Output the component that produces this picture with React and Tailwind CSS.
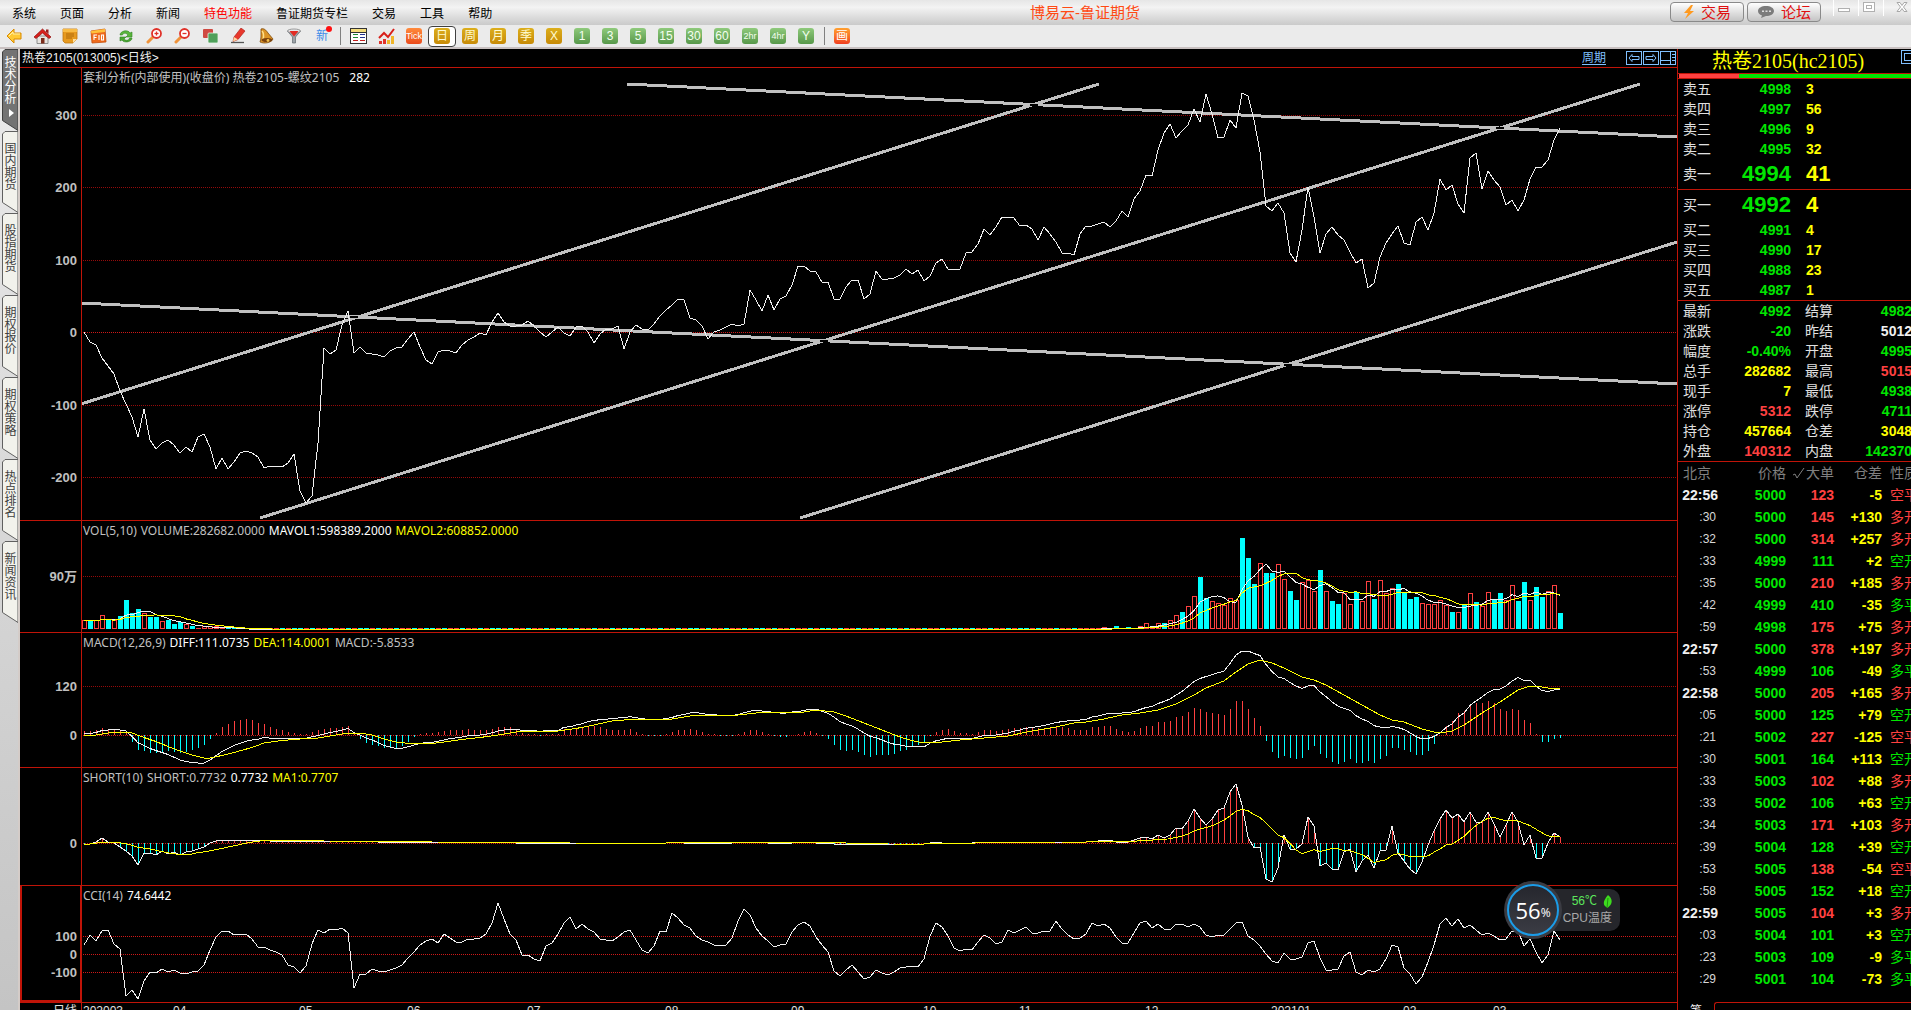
import React from "react";

const GREEN = "text-[#00e600]";
const RED = "text-[#ff4040]";
const YELLOW = "text-[#ffff00]";
const WHITE = "text-[#f0f0f0]";

const menus = ["系统", "页面", "分析", "新闻", "特色功能", "鲁证期货专栏", "交易", "工具", "帮助"];
const sideTabs = ["技术分析", "国内期货", "股指期货", "期权报价", "期权策略", "热点排名", "新闻资讯"];

const sells = [["卖五", 4998, 3], ["卖四", 4997, 56], ["卖三", 4996, 9], ["卖二", 4995, 32]];
const buys = [["买二", 4991, 4], ["买三", 4990, 17], ["买四", 4988, 23], ["买五", 4987, 1]];

const quotes = [
  ["最新", "4992", GREEN, "结算", "4982", GREEN],
  ["涨跌", "-20", GREEN, "昨结", "5012", WHITE],
  ["幅度", "-0.40%", GREEN, "开盘", "4995", GREEN],
  ["总手", "282682", YELLOW, "最高", "5015", RED],
  ["现手", "7", YELLOW, "最低", "4938", GREEN],
  ["涨停", "5312", RED, "跌停", "4711", GREEN],
  ["持仓", "457664", YELLOW, "仓差", "3048", YELLOW],
  ["外盘", "140312", RED, "内盘", "142370", GREEN],
];

const ticks = [
  ["22:56", 5000, 123, "-5", "空平", RED],
  [":30", 5000, 145, "+130", "多开", RED],
  [":32", 5000, 314, "+257", "多开", RED],
  [":33", 4999, 111, "+2", "空开", GREEN],
  [":35", 5000, 210, "+185", "多开", RED],
  [":42", 4999, 410, "-35", "多平", GREEN],
  [":59", 4998, 175, "+75", "多开", RED],
  ["22:57", 5000, 378, "+197", "多开", RED],
  [":53", 4999, 106, "-49", "多平", GREEN],
  ["22:58", 5000, 205, "+165", "多开", RED],
  [":05", 5000, 125, "+79", "空开", GREEN],
  [":21", 5002, 227, "-125", "空平", RED],
  [":30", 5001, 164, "+113", "空开", GREEN],
  [":33", 5003, 102, "+88", "多开", RED],
  [":33", 5002, 106, "+63", "空开", GREEN],
  [":34", 5003, 171, "+103", "多开", RED],
  [":39", 5004, 128, "+39", "空开", GREEN],
  [":53", 5005, 138, "-54", "空平", RED],
  [":58", 5005, 152, "+18", "空开", GREEN],
  ["22:59", 5005, 104, "+3", "多开", RED],
  [":03", 5004, 101, "+3", "空开", GREEN],
  [":23", 5003, 109, "-9", "多平", GREEN],
  [":29", 5001, 104, "-73", "多平", GREEN],
];

// spread line, one row per trading day
const spread = [
  332, 342, 345, 358, 366, 374, 391, 404, 417, 437, 409, 440, 449, 443, 440, 445, 453, 447, 452, 437,
  434, 447, 469, 458, 469, 462, 453, 451, 453, 457, 468, 466, 466, 467, 463, 454, 491, 503, 496, 443,
  348, 354, 350, 325, 311, 353, 347, 353, 354, 355, 357, 351, 348, 347, 339, 332, 347, 360, 364, 352,
  350, 351, 353, 345, 340, 337, 333, 335, 322, 313, 322, 326, 326, 325, 321, 326, 332, 337, 332, 327,
  333, 336, 327, 326, 332, 343, 334, 329, 329, 326, 349, 332, 325, 329, 330, 324, 316, 310, 305, 299,
  300, 318, 320, 326, 339, 332, 330, 327, 324, 326, 324, 290, 300, 311, 295, 310, 299, 296, 285, 266,
  266, 271, 272, 282, 282, 299, 299, 287, 280, 280, 299, 294, 271, 279, 279, 278, 275, 269, 274, 270,
  281, 276, 263, 259, 269, 269, 269, 253, 252, 244, 229, 235, 227, 217, 217, 218, 226, 225, 229, 240,
  227, 234, 242, 253, 253, 255, 234, 226, 226, 224, 222, 227, 221, 211, 217, 199, 191, 175, 176, 150,
  133, 124, 138, 131, 125, 109, 122, 94, 114, 138, 137, 120, 128, 93, 96, 120, 152, 206, 211, 203,
  213, 253, 262, 230, 187, 217, 253, 234, 227, 235, 240, 252, 263, 259, 288, 283, 257, 243, 234, 226,
  243, 245, 222, 217, 230, 213, 179, 190, 185, 204, 213, 158, 153, 189, 171, 180, 187, 205, 200, 211,
  200, 179, 167, 167, 160, 140, 128,
];

// negative = down day
const quiet = Array.from({ length: 142 }, (_, i) => ((i * 7) % 11 < 5 ? -0.4 : 0.4));
const volume = [
  9, -9, 9, 14, -9, 9, -13, -29, -16, -20, 16, -12, -12, 8, -9, -5, -7, 5, -3, 1, 3, 3, 3, 2, -2,
  ...quiet,
  1, 1, 1, 2, 1, -3, 1, -2, 1, 3, 6, 3, 6, -6, 9, 14, -17, 23, 33, -52, -31, 28, 26, 24, 31, 29, -91,
  -71, -45, 66, -56, -56, 65, 50, -38, -29, 47, 49, 38, -59, 38, -28, -25, 36, 25, -37, 28, 48, -30,
  49, 36, 41, -45, -36, -30, -32, 26, 25, 25, 29, 24, -17, 17, -25, 36, -27, 23, 37, -30, -36, 29, 44,
  -28, -47, 29, -42, -32, 38, 44, -16,
];

const macd = [
  4, 4, 5, 7, 6, 6, 4, 3, -7, -15, -16, -18, -18, -17, -16, -17, -18, -17, -15, -13, -10, -4, 2, 8, 11,
  14, 15, 16, 15, 12, 11, 8, 6, 5, 3, 2, 1, 1, 3, 5, 6, 7, 7, 8, 9, 1, -4, -8, -10, -11, -13, -13, -13,
  -11, -7, -2, 1, 2, 2, 3, 4, 5, 5, 5, 6, 5, 5, 5, 6, 8, 8, 8, 6, 2, 1, 1, -1, 1, 1, 1, 6, 5, 7, 7, 9,
  9, 8, 6, 5, 5, 5, 6, 3, 1, -1, -1, -1, 1, 3, 5, 5, 6, 5, 3, 1, 1, -1, -1, -1, 1, 3, 5, 5, 3, 1, -1,
  -2, -2, 0, 1, 3, 4, 2, -1, -4, -10, -15, -16, -15, -17, -20, -22, -20, -20, -20, -19, -16, -15, -12,
  -10, -8, -1, 3, 5, 6, 4, 2, 2, 1, 3, 5, 5, 4, 5, 6, 7, 7, 8, 7, 7, 7, 8, 9, 8, 7, 5, 5, 5, 8, 8, 9, 9,
  6, 4, 3, 4, 7, 9, 9, 13, 13, 14, 18, 19, 23, 27, 26, 23, 22, 21, 20, 26, 34, 34, 26, 17, 9, -6, -17,
  -23, -21, -23, -24, -23, -15, -11, -19, -23, -27, -29, -27, -24, -28, -28, -26, -28, -24, -21, -13,
  -13, -15, -17, -20, -20, -16, -9, 0, 9, 14, 22, 24, 31, 32, 32, 34, 32, 26, 24, 26, 25, 15, 12, 1,
  -7, -7, -4, -3,
];

const deaKeys = [
  [0, -1], [2, 0], [4, 2], [6, 3], [8, 2], [10, -2.5], [12, -6.5], [14, -11.5], [16, -16], [18, -20],
  [20, -23], [21, -23], [23, -20.5], [25, -17.5], [28, -12.5], [30, -8], [33, -5.5], [36, -4], [39, -3],
  [41, -1], [44, 2], [46, 2], [48, 0], [50, -4], [52, -7], [55, -9], [58, -8.5], [60, -7], [63, -4.5],
  [66, -2.5], [69, 0], [72, 3], [74, 4], [79, 4], [82, 6.5], [85, 10], [88, 14], [90, 15], [93, 16],
  [98, 16], [102, 20], [109, 20], [112, 22], [114, 23], [120, 23], [122, 25], [125, 23], [127, 19],
  [130, 12], [133, 5], [136, -2], [138, -5.5], [140, -8], [143, -7], [146, -5], [150, -3], [154, -1],
  [156, 1.5], [158, 4], [162, 8], [165, 12], [167, 13], [170, 16], [173, 20], [176, 22], [179, 25],
  [182, 31], [185, 40], [187, 47], [190, 54], [192, 63], [194, 71], [196, 75], [198, 72], [200, 67],
  [203, 58], [205, 55], [207, 50], [210, 40], [213, 30], [216, 20], [218, 15], [220, 13], [223, 6],
  [225, 3], [226, 2], [228, 4], [230, 10], [233, 22], [236, 33], [239, 45], [241, 49], [243, 48],
  [244, 47], [246, 47],
];

const flat = (n, v) => Array(n).fill(v);
const short = [
  -1, -1, 1, 5, 1, 0, -4, -8, -13, -22, -10, -10, -12, -8, -11, -9, -12, -9, -8, -6, -4, 0, 2, 3, 2,
  ...flat(6, 3), ...flat(18, 2), ...flat(23, 1), ...flat(26, 0), 1, 1, ...flat(9, 0), ...flat(5, 1),
  ...flat(5, 0), 1, 1, 1, ...flat(3, 0), ...flat(16, -1), 0, 1, ...flat(6, 0), 1, 1, 1, 0,
  ...flat(13, 1),
  1, 1, 2, 2, 3, 3, 1, 1, 1, 3, 5, 6, 4, 8, 5, 8, 15, 14, 22, 34, 25, 18, 24, 33, 35, 51, 59, 38, 6, -5,
  -4, -36, -39, -25, 8, -6, -6, -1, 26, 17, -23, -20, -26, -27, -9, -6, -29, -18, -12, -25, -8, -7, 17,
  -10, -18, -26, -31, -19, -2, 12, 24, 33, 25, 29, 21, 31, 21, 21, 31, 19, 6, 18, 31, 21, -2, 8, -15,
  -15, 0, 10, 6,
];

const cci = [
  9, 19, 13, 23, 24, 10, 5, -42, -36, -45, -27, -18, -19, -15, -18, -16, -19, -20, -18, -17, -11, 4, 17,
  23, 23, 19, 20, 20, 15, 7, 7, 4, 2, -1, -11, -13, -19, -12, 10, 24, 21, 25, 24, 26, 21, -34, -20, -20,
  -15, -17, -18, -16, -14, -11, -4, 2, 9, 13, 15, 11, 20, 16, 12, 12, 15, 15, 16, 20, 31, 51, 35, 20,
  14, -1, -1, -5, -7, 8, 11, 20, 31, 37, 25, 30, 25, 22, 15, 14, 13, 17, 22, 24, 14, 4, 1, 8, 23, 22,
  41, 36, 29, 26, 18, 14, 12, 9, 9, 9, 16, 33, 45, 39, 26, 18, 13, 7, 9, 10, 22, 29, 32, 28, 17, 9, 2,
  -17, -22, -16, -11, -18, -25, -23, -16, -19, -21, -18, -14, -13, -12, -13, -5, 18, 31, 27, 18, 6, 3,
  5, 4, 12, 19, 16, 10, 12, 24, 21, 24, 27, 21, 21, 23, 23, 33, 25, 19, 15, 16, 20, 31, 28, 30, 26, 17,
  11, 11, 21, 31, 33, 26, 30, 25, 24, 30, 30, 27, 30, 27, 19, 17, 19, 19, 25, 31, 32, 18, 14, 8, 0, -7,
  -9, 1, -5, -5, -3, 11, 13, -4, -16, -16, -15, -2, 2, -18, -21, -16, -18, -15, -5, 9, 7, -14, -20, -30,
  -23, -8, 9, 30, 36, 28, 35, 26, 29, 24, 19, 21, 18, 14, 15, 23, 23, 8, 15, 2, -9, -1, 23, 14,
];

const months = [
  [0, "202003"], [15, "04"], [36, "05"], [54, "06"], [74, "07"], [97, "08"], [118, "09"], [140, "10"],
  [156, "11"], [177, "12"], [198, "202101"], [220, "02"], [235, "03"],
];

const STEP = 6;
const xAt = (i) => 64 + i * STEP;
const points = (list, base) => list.map((v, i) => `${xAt(i)},${base - v}`).join(" ");

const average = (list, n) =>
  list.map((_, i) => {
    const part = list.slice(Math.max(0, i - n + 1), i + 1).map(Number);
    return part.reduce((a, b) => a + b, 0) / part.length;
  });

const fillKeys = (keys) => {
  const out = [];
  keys.forEach(([i, v], k) => {
    if (k === 0) return out.push(v);
    const [pi, pv] = keys[k - 1];
    for (let j = pi + 1; j <= i; j++) out.push(pv + ((v - pv) * (j - pi)) / (i - pi));
  });
  return out;
};

const volumeAbs = volume.map(Math.abs);
const dea = fillKeys(deaKeys);
const diff = dea.map((v, i) => v + macd[i] / 2);

function Line({ list, base, color = "#f0f0f0" }) {
  return (
    <polyline points={points(list, base)} fill="none" stroke={color} strokeWidth="1" shapeRendering="crispEdges" />
  );
}

function Sticks({ list, base }) {
  return (
    <g shapeRendering="crispEdges">
      {list.map((v, i) => (
        <rect
          key={i}
          x={xAt(i)}
          y={v > 0 ? base - v : base}
          width="1"
          height={Math.abs(v)}
          fill={v > 0 ? "#ff4040" : "#00ffff"}
        />
      ))}
    </g>
  );
}

// grid: [y, label, bright]
function Pane({ className, title, grid, active, children }) {
  return (
    <section className={`relative overflow-hidden border-b border-[#c01408] ${className}`}>
      <svg className="block h-full w-full">
        {grid.map(([y, label, bright]) => (
          <g key={y}>
            <line
              x1="63"
              x2="100%"
              y1={y + 0.5}
              y2={y + 0.5}
              stroke={bright ? "#d01818" : "#960a0a"}
              strokeDasharray="1 1"
              shapeRendering="crispEdges"
            />
            <text
              x="57"
              y={y + 5}
              textAnchor="end"
              className="fill-[#c0c0c0] font-['Liberation_Sans','Noto_Sans_CJK_SC',sans-serif] text-[13px] font-bold"
            >
              {label}
            </text>
          </g>
        ))}
        {children}
        <rect x="61" y="0" width="1" height="100%" fill="#c01408" />
      </svg>
      {active && <div className="absolute inset-y-0 left-0 w-[62px] border-2 border-t-0 border-[#c01408]" />}
      <h2 className="absolute left-[63px] top-0 flex gap-1 whitespace-pre font-['Noto_Sans','Noto_Sans_CJK_SC',sans-serif] text-[12px] leading-[20px] text-[#c0c0c0]">
        {title}
      </h2>
    </section>
  );
}

function ArrowLeft() {
  return (
    <svg width="16" height="16" viewBox="0 0 16 16">
      <path d="M1 8 8 1v4h7v6H8v4z" fill="#ffc933" stroke="#d98a00" strokeLinejoin="round" />
      <path d="M3 8 7 4v2h7" fill="none" stroke="#fff0a8" />
    </svg>
  );
}

function Home() {
  return (
    <svg width="17" height="16" viewBox="0 0 17 16">
      <path d="M3 8h11v7.500H3z" fill="#e8e4e0" stroke="#777" strokeWidth=".8" />
      <path d="M0 9 8.500 1 17 9l-2 1.500L8.500 5 2 10.500z" fill="#d8201c" stroke="#8e0f0f" strokeWidth=".7" />
      <path d="M12 1.500h2.500v4.500L12 3.500z" fill="#9a1a1a" />
      <path d="M7 10h3.500v5.500H7z" fill="#7c2d1c" />
    </svg>
  );
}

function Note() {
  return (
    <svg width="16" height="16" viewBox="0 0 16 16">
      <path d="M1 1h14v10l-4 4H3l-2-2z" fill="#e79a20" stroke="#c07710" strokeWidth=".8" />
      <path d="M1 1h14v3H1z" fill="#f8bb45" />
      <path d="M4 6h8M4 8h8M4 10h6" stroke="#a8640a" strokeWidth=".9" />
      <path d="M11 15v-4h4z" fill="#ffe0a0" />
    </svg>
  );
}

function F10() {
  return (
    <svg width="17" height="16" viewBox="0 0 17 16">
      <path d="M1 3 15 1l1 13-14 1z" fill="#ef6a1c" stroke="#c44d0b" strokeWidth=".8" />
      <path d="M1 3 15 1v3L1.500 5.500z" fill="#ffc13d" />
      <path d="M4 12V7h3M4 9.500h2.500M9 7v5M11.500 7h2v5h-2z" stroke="#fff" strokeWidth="1.100" fill="none" />
    </svg>
  );
}

function Refresh() {
  return (
    <svg width="16" height="16" viewBox="0 0 16 16">
      <path d="M2 7c0-4 8-6 10-2l2-1v5H8l2-2C8 4.500 5 5 4.500 7z" fill="#5ab53c" stroke="#2f8423" strokeWidth=".6" />
      <path d="M14 10c0 4-8 5.500-10 2l-2 1V9h6l-2 2c2 2 5 1.500 5.500-1z" fill="#4ca632" stroke="#2f8423" strokeWidth=".6" />
    </svg>
  );
}

function Magnifier({ plus }) {
  return (
    <svg width="17" height="16" viewBox="0 0 17 16">
      <path d="m2 14 5-5" stroke="#f0923a" strokeWidth="3" strokeLinecap="round" />
      <circle cx="10.500" cy="5.500" r="4.500" fill="#fff" stroke="#e03028" strokeWidth="1.800" />
      <path d="M8.500 5.500h4" stroke="#e03028" strokeWidth="1.300" />
      {plus && <path d="M10.500 3.500v4" stroke="#e03028" strokeWidth="1.300" />}
    </svg>
  );
}

function Squares() {
  return (
    <svg width="17" height="16" viewBox="0 0 17 16">
      <rect x="1" y="1" width="10" height="9" rx="1" fill="#cf4a42" />
      <rect x="6" y="5" width="10" height="10" rx="1" fill="#4fa05a" stroke="#e8f4e8" strokeWidth=".8" />
    </svg>
  );
}

function Pencil() {
  return (
    <svg width="16" height="16" viewBox="0 0 16 16">
      <path d="M4 9 11 0l4 3-7 8.500-5 2z" fill="#e8382c" stroke="#a81810" strokeWidth=".6" />
      <path d="m4 9 4 2.500-5 2z" fill="#ffd7a0" />
      <path d="M1 14.500h13" stroke="#555" strokeWidth="1.300" />
    </svg>
  );
}

function Bell() {
  return (
    <svg width="16" height="16" viewBox="0 0 16 16">
      <path d="M3 1c3-1 5 1 7 4l5 6c-2 4-9 5-13 3 1-3 1-5 1-8z" fill="#dc9426" stroke="#7e4a0c" strokeWidth=".8" />
      <path d="M4 3c2 2 2 5 1 9" stroke="#ffe08a" strokeWidth="1.500" fill="none" />
      <ellipse cx="9" cy="12" rx="5.500" ry="2" fill="#7b420d" />
      <circle cx="10" cy="12.500" r="1.400" fill="#f5c14c" />
    </svg>
  );
}

function Funnel() {
  return (
    <svg width="16" height="16" viewBox="0 0 16 16">
      <path d="M1.500 3 6.500 9v6h3V9l5-6z" fill="#9da3a8" stroke="#62686e" strokeWidth=".7" />
      <ellipse cx="8" cy="3" rx="6.500" ry="2" fill="#e6e8ea" stroke="#777" strokeWidth=".7" />
      <path d="M3.500 3h9L8 8.500z" fill="#e32b24" />
    </svg>
  );
}

function Sheet() {
  return (
    <svg width="17" height="17" viewBox="0 0 17 17" shapeRendering="crispEdges">
      <rect x=".5" y=".5" width="16" height="15" fill="#fff" stroke="#333" />
      <rect x="1" y="1" width="15" height="3" fill="#f3dc7a" />
      <path d="M1 4.500h15" stroke="#333" />
      <path d="M3 6.500h5M3 9.500h5" stroke="#1c8a34" />
      <path d="M10 6.500h5M10 9.500h5" stroke="#22308c" />
      <path d="M3 12.500h5M10 12.500h5" stroke="#c42020" />
    </svg>
  );
}

function Bars() {
  return (
    <svg width="17" height="16" viewBox="0 0 17 16">
      <path d="M1 13h3v3H1zM5 11h3v5H5z" fill="#e23329" />
      <path d="M9 12h3v4H9zM13 8h3v8h-3z" fill="#f0b52a" />
      <path d="M1 10 6 5l4 4 6-8" fill="none" stroke="#d81f1a" strokeWidth="2" />
    </svg>
  );
}

function Badge({ className, children }) {
  return (
    <span className={`flex h-4 w-4 items-center justify-center rounded-[3px] ${className}`}>{children}</span>
  );
}

const gold = "bg-gradient-to-b from-[#dcae1c] to-[#c78a06] text-[12px] text-[#fffbd0]";
const green = "bg-gradient-to-b from-[#8fca7c] to-[#57984a] text-[12px] text-[#f4fff0]";
const greenSmall = "bg-gradient-to-b from-[#8fca7c] to-[#57984a] text-[9px] text-[#f4fff0]";

function Tool({ label, active, children }) {
  return (
    <button
      type="button"
      aria-label={label}
      className={`flex h-[21px] w-7 items-center justify-center ${
        active ? "rounded-[4px] border border-[#404040] bg-white" : ""
      }`}
    >
      {children}
    </button>
  );
}

function Toolbar() {
  return (
    <div className="flex h-[22px] items-center bg-[#ebebeb] leading-none">
      <Tool label="后退"><ArrowLeft /></Tool>
      <Tool label="首页"><Home /></Tool>
      <Tool label="公告"><Note /></Tool>
      <Tool label="资料"><F10 /></Tool>
      <Tool label="刷新"><Refresh /></Tool>
      <Tool label="放大"><Magnifier plus /></Tool>
      <Tool label="缩小"><Magnifier /></Tool>
      <Tool label="叠加"><Squares /></Tool>
      <Tool label="画线"><Pencil /></Tool>
      <Tool label="预警"><Bell /></Tool>
      <Tool label="筛选"><Funnel /></Tool>
      <Tool label="新闻">
        <span className="relative text-[12px] text-[#3d8be8]">
          新
          <i className="absolute -right-1 -top-1 h-1.5 w-1.5 rounded-full bg-[#ff1010]" />
        </span>
      </Tool>
      <span className="flex w-2 justify-center"><i className="h-[18px] w-px bg-[#808080]" /></span>
      <Tool label="报价"><Sheet /></Tool>
      <Tool label="走势"><Bars /></Tool>
      <Tool label="分笔">
        <Badge className="bg-gradient-to-b from-[#ff8a3c] to-[#ea4a1c] text-[9px] text-white">Tick</Badge>
      </Tool>
      <Tool label="日线" active><Badge className={gold}>日</Badge></Tool>
      {["周", "月", "季", "X"].map((t) => (
        <Tool key={t} label={t}><Badge className={gold}>{t}</Badge></Tool>
      ))}
      {["1", "3", "5", "15", "30", "60"].map((t) => (
        <Tool key={t} label={`${t}分钟`}><Badge className={green}>{t}</Badge></Tool>
      ))}
      {["2hr", "4hr"].map((t) => (
        <Tool key={t} label={t}><Badge className={greenSmall}>{t}</Badge></Tool>
      ))}
      <Tool label="Y"><Badge className={green}>Y</Badge></Tool>
      <span className="flex w-2 justify-center"><i className="h-[18px] w-px bg-[#808080]" /></span>
      <Tool label="画图">
        <Badge className="bg-gradient-to-b from-[#ffa030] to-[#f03c20] text-[12px] text-white">画</Badge>
      </Tool>
    </div>
  );
}

function TopButton({ icon, children }) {
  return (
    <button
      type="button"
      className="flex h-5 w-[74px] items-center justify-center gap-1.5 rounded-[4px] border border-[#8a8a8a] bg-gradient-to-b from-white to-[#c4c4c4] text-[15px] leading-none text-[#e01010]"
    >
      {icon}
      {children}
    </button>
  );
}

function MenuBar() {
  return (
    <header className="flex h-[25px] bg-gradient-to-b from-[#e6e6e6] via-[#f3f3f3] via-30% to-[#cacaca]">
      <nav className="flex items-center pt-0.5">
        {menus.map((m) => (
          <button
            key={m}
            type="button"
            className={`px-3 text-[12px] leading-none ${m === "特色功能" ? "text-[#ff0000]" : "text-black"}`}
          >
            {m}
          </button>
        ))}
      </nav>
      <h1 className="flex flex-1 items-center justify-center pr-1 text-[15px] leading-none text-[#ff4a14]">
        博易云-鲁证期货
      </h1>
      <div className="flex gap-[3px] pt-0.5">
        <TopButton
          icon={
            <svg width="12" height="14" viewBox="0 0 12 14">
              <path d="M8 0 1 8h4l-3 6 9-8H7l3-6z" fill="#ff9a1f" />
            </svg>
          }
        >
          交易
        </TopButton>
        <TopButton
          icon={
            <svg width="18" height="14" viewBox="0 0 18 14">
              <path d="M9 1c4.500 0 8 2 8 5s-3.500 5-8 5l-5 2 1-2.500C2.500 9.500 1 8 1 6c0-3 3.500-5 8-5z" fill="#7c7c7c" />
              <path d="M5 5.500h2v1.500H5zM8.500 5.500h2v1.500h-2zM12 5.500h2v1.500h-2z" fill="#ddd" />
            </svg>
          }
        >
          论坛
        </TopButton>
      </div>
      <div className="ml-3 flex h-4 w-[78px]">
        <button type="button" aria-label="最小化" className="w-[25px] border-l border-white pl-1">
          <svg width="13" height="16" viewBox="0 0 13 16">
            <rect x=".5" y="8.500" width="11" height="3" fill="#fff" stroke="#b0b0b0" />
          </svg>
        </button>
        <button type="button" aria-label="最大化" className="w-[25px] border-l border-white pl-1">
          <svg width="13" height="16" viewBox="0 0 13 16" fill="#fff" stroke="#b0b0b0">
            <rect x=".5" y="2.500" width="11" height="9" />
            <rect x="3.500" y="5.500" width="5" height="3" />
          </svg>
        </button>
        <button type="button" aria-label="关闭" className="border-l border-white pl-3">
          <svg width="13" height="16" viewBox="0 0 13 16">
            <path d="M1 2.500h3l2 3 2-3h3L7.500 7l3.500 4.500H8l-2-3-2 3H1L4.500 7z" fill="#fff" stroke="#a8a8a8" />
          </svg>
        </button>
      </div>
    </header>
  );
}

function SideBar() {
  return (
    <aside className="w-5 shrink-0 border-r-2 border-[#d4ccc8] bg-gradient-to-b from-[#ebebeb] to-[#c4c4c4]">
      {sideTabs.map((t, n) => (
        <button
          key={t}
          type="button"
          className={`relative flex h-[82px] w-[18px] flex-col items-center pl-[3px] text-[12px] leading-3 ${
            n === 0 ? "pt-2 text-white" : "pt-3 text-[#404040]"
          }`}
        >
          <svg className="absolute left-0 top-0" width="18" height="82" viewBox="0 0 18 82">
            <path
              d="M18 .5H5L2.500 3v68.500L18 81.500z"
              fill={n === 0 ? "#737373" : "#f2f2ec"}
              stroke={n === 0 ? "#404040" : "#606060"}
            />
          </svg>
          {t.split("").map((c) => (
            <span key={c} className="relative">{c}</span>
          ))}
          {n === 0 && (
            <svg className="relative mt-1" width="6" height="8" viewBox="0 0 6 8">
              <path d="M1 0v8l5-4z" fill="#fff" />
            </svg>
          )}
        </button>
      ))}
    </aside>
  );
}

function Trend({ x1, y1, x2, y2 }) {
  return <line x1={x1} y1={y1} x2={x2} y2={y2} stroke="#c0c0c0" strokeWidth="3" shapeRendering="crispEdges" />;
}

function Charts() {
  return (
    <main className="flex min-w-0 flex-1 flex-col bg-black">
      <div className="flex h-[19px] shrink-0 items-center border-b border-[#c01408] pl-0.5 text-[12px] leading-none text-[#f0f0f0]">
        <span>热卷2105(013005)&lt;日线&gt;</span>
        <a href="#period" className="ml-auto mr-5 text-[#80c0ff] underline underline-offset-2">周期</a>
        <div className="flex gap-px pr-px text-[#80c0ff]">
          <button type="button" aria-label="上一个" className="h-3.5 w-4 border border-current">
            <svg width="14" height="12" viewBox="0 0 14 12" fill="none" stroke="currentColor">
              <path d="m2 6 3-3.500v2h7v3H5v2z" />
            </svg>
          </button>
          <button type="button" aria-label="下一个" className="h-3.5 w-4 border border-current">
            <svg width="14" height="12" viewBox="0 0 14 12" fill="none" stroke="currentColor">
              <path d="M12 6 9 2.500v2H2v3h7v2z" />
            </svg>
          </button>
          <button type="button" aria-label="布局" className="h-3.5 w-4 border border-current">
            <svg width="14" height="12" viewBox="0 0 14 12" fill="none" stroke="currentColor" shapeRendering="crispEdges">
              <path d="M0 8.500h9.500M9.500 0v12M11 2.500h3M11 5.500h3M11 8.500h3" />
            </svg>
          </button>
        </div>
      </div>

      <Pane
        className="min-h-0 flex-1"
        title={<><span>套利分析(内部使用)(收盘价) 热卷2105-螺纹2105</span><span className="ml-1.5 text-white">282</span></>}
        grid={[[47, "300"], [119, "200"], [192, "100"], [264, "0", true], [337, "-100"], [409, "-200"]]}
      >
        <g transform="translate(0 -68)">
          <Trend x1="607" y1="84" x2="1657" y2="137" />
          <Trend x1="61" y1="303" x2="1657" y2="384" />
          <Trend x1="61" y1="404" x2="1079" y2="84" />
          <Trend x1="240" y1="518" x2="1620" y2="84" />
          <Trend x1="780" y1="518" x2="1657" y2="242" />
          <g fill="#000">
            <rect x="330" y="316" width="8" height="2" />
            <rect x="1010" y="104" width="8" height="2" />
            <rect x="800" y="340" width="8" height="2" />
            <rect x="1476" y="127" width="8" height="2" />
            <rect x="1264" y="364" width="8" height="2" />
          </g>
          <polyline
            points={spread.map((y, i) => `${xAt(i)},${y}`).join(" ")}
            fill="none"
            stroke="#f0f0f0"
            shapeRendering="crispEdges"
          />
        </g>
      </Pane>

      <Pane
        className="h-28 shrink-0"
        title={
          <>
            <span>VOL(5,10)</span>
            <span>VOLUME:282682.0000</span>
            <span className="text-white">MAVOL1:598389.2000</span>
            <span className="text-[#ffff00]">MAVOL2:608852.0000</span>
          </>
        }
        grid={[[55, "90万"]]}
      >
        <g shapeRendering="crispEdges">
          {volume.map((v, i) => {
            const h = Math.max(1, Math.abs(v));
            return v < 0 || h < 2 ? (
              <rect key={i} x={xAt(i) - 2} y={108 - h} width="5" height={h} fill={v < 0 ? "#00ffff" : "#ff4040"} />
            ) : (
              <rect key={i} x={xAt(i) - 1.5} y={108.5 - h} width="4" height={h - 1} fill="#000" stroke="#ff4040" />
            );
          })}
        </g>
        <Line list={average(volumeAbs, 5)} base={108.9} />
        <Line list={average(volumeAbs, 10)} base={108.9} color="#ffff00" />
      </Pane>

      <Pane
        className="h-[135px] shrink-0"
        title={
          <>
            <span>MACD(12,26,9)</span>
            <span className="text-white">DIFF:111.0735</span>
            <span className="text-[#ffff00]">DEA:114.0001</span>
            <span>MACD:-5.8533</span>
          </>
        }
        grid={[[53, "120"], [102, "0", true]]}
      >
        <Sticks list={macd} base={102} />
        <Line list={diff} base={102} />
        <Line list={dea} base={102} color="#ffff00" />
      </Pane>

      <Pane
        className="h-[118px] shrink-0"
        title={
          <>
            <span>SHORT(10)</span>
            <span>SHORT:0.7732</span>
            <span className="text-white">0.7732</span>
            <span className="text-[#ffff00]">MA1:0.7707</span>
          </>
        }
        grid={[[75, "0", true]]}
      >
        <Sticks list={short} base={75} />
        <Line list={short} base={75} />
        <Line list={average(short, 10)} base={75} color="#ffff00" />
      </Pane>

      <Pane
        className="h-[117px] shrink-0"
        active
        title={<><span>CCI(14)</span><span className="text-white">74.6442</span></>}
        grid={[[50, "100", true], [68, "0", true], [86, "-100", true]]}
      >
        <Line list={cci} base={68} />
      </Pane>

      <svg className="block h-[7px] w-full shrink-0">
        <g className="fill-[#e0e0e0] text-[12px]">
          <text x="33" y="12">日线</text>
          {months.map(([i, m]) => (
            <text key={m} x={xAt(i) - 1} y="12">{m}</text>
          ))}
        </g>
        <rect x="61" y="0" width="1" height="8" fill="#c01408" />
      </svg>
    </main>
  );
}

function BookRow({ row }) {
  return (
    <tr className="h-5">
      <th className="w-[50px] pl-[5px] text-left font-normal text-[#e0e0e0]">{row[0]}</th>
      <td className={`w-[63px] text-right font-bold ${GREEN}`}>{row[1]}</td>
      <td className={`pl-[15px] font-bold ${YELLOW}`}>{row[2]}</td>
    </tr>
  );
}

function BestRow({ name, price, size }) {
  return (
    <tr className="h-[30px]">
      <th className="pl-[5px] text-left font-normal text-[#e0e0e0]">{name}</th>
      <td className={`text-right text-[22px] font-bold ${GREEN}`}>{price}</td>
      <td className={`pl-[15px] text-[22px] font-bold ${YELLOW}`}>{size}</td>
    </tr>
  );
}

function QuotePanel() {
  return (
    <aside className="flex w-[234px] shrink-0 flex-col overflow-hidden border-l border-[#c01408] bg-black text-[14px] leading-none">
      <div className="flex h-6 shrink-0 justify-between">
        <h2 className="pl-[34px] font-['Liberation_Serif','Noto_Sans_CJK_SC',serif] text-[20px] leading-6 text-[#ffff00]">
          热卷2105(hc2105)
        </h2>
        <button type="button" aria-label="窗口" className="mt-px h-3.5 w-2.5 border border-r-0 border-[#80c0ff] pl-0.5">
          <i className="block h-2 w-2 border border-r-0 border-[#80c0ff]" />
        </button>
      </div>
      <div className="flex h-1.5 shrink-0 border-y border-[#c01408] pl-px">
        <i className="w-[26%] bg-[#ff4040]" />
        <i className="flex-1 bg-[#00e600]" />
      </div>

      <table className="w-full shrink-0 table-fixed border-separate border-spacing-0">
        <tbody>
          {sells.map((r) => <BookRow key={r[0]} row={r} />)}
          <BestRow name="卖一" price="4994" size="41" />
        </tbody>
      </table>
      <table className="w-full shrink-0 table-fixed border-separate border-spacing-0 border-t border-[#c01408]">
        <colgroup>
          <col className="w-[50px]" />
          <col className="w-[63px]" />
          <col />
        </colgroup>
        <tbody>
          <BestRow name="买一" price="4992" size="4" />
          {buys.map((r) => <BookRow key={r[0]} row={r} />)}
        </tbody>
      </table>

      <table className="w-[234px] shrink-0 table-fixed border-separate border-spacing-0 border-t border-[#c01408]">
        <tbody>
          {quotes.map(([a, av, ac, b, bv, bc]) => (
            <tr key={a} className="h-5">
              <th className="w-[43px] pl-[5px] text-left font-normal text-[#e0e0e0]">{a}</th>
              <td className={`w-[70px] text-right font-bold ${ac}`}>{av}</td>
              <th className="w-[56px] pl-[14px] text-left font-normal text-[#e0e0e0]">{b}</th>
              <td className={`text-right font-bold ${bc}`}>{bv}</td>
            </tr>
          ))}
        </tbody>
      </table>

      <table className="w-[242px] shrink-0 table-fixed border-separate border-spacing-0 border-t border-[#c01408]">
        <thead>
          <tr className="h-[22px] whitespace-nowrap text-right text-[#808080]">
            <th className="w-10 pl-[5px] text-left font-normal">北京</th>
            <th className="w-[68px] font-normal">价格</th>
            <th className="w-12 font-normal">
              <span className="flex justify-end">
                <svg width="14" height="14" viewBox="0 0 14 14" fill="none" stroke="currentColor">
                  <path d="m1 9 2-1 2 4L12 2" />
                </svg>
                大单
              </span>
            </th>
            <th className="w-12 font-normal">仓差</th>
            <th className="pl-2 text-left font-normal">性质</th>
          </tr>
        </thead>
        <tbody>
          {ticks.map(([time, price, size, delta, kind, color]) => (
            <tr key={`${time}${price}${size}`} className="h-[22px] text-right">
              <td className={time.length > 3 ? "pl-1 font-bold text-[#f0f0f0]" : "pr-0.5 text-[12px] text-[#d8d8d8]"}>
                {time}
              </td>
              <td className={`font-bold ${GREEN}`}>{price}</td>
              <td className={`font-bold ${color}`}>{size}</td>
              <td className={`font-bold ${YELLOW}`}>{delta}</td>
              <td className={`whitespace-nowrap pl-2 text-left ${color}`}>{kind}</td>
            </tr>
          ))}
        </tbody>
      </table>

      <div className="mt-auto flex h-2 shrink-0 overflow-hidden text-[12px] leading-[18px]">
        <button type="button" className="h-[18px] w-9 text-[#f0f0f0]">笔</button>
        <i className="flex-1 rounded-tl-[3px] border-l border-t border-[#c01408]" />
      </div>
    </aside>
  );
}

function CpuWidget() {
  return (
    <div className="absolute bottom-[71px] right-[291px] flex items-center">
      <div className="z-10 flex h-[58px] w-[58px] items-center justify-center rounded-full bg-[#3a3b42]">
        <div className="flex h-[52px] w-[52px] items-center justify-center rounded-full border-2 border-[#1b9ce8] bg-gradient-to-b from-[#26272e] to-[#3b3c44] font-['Open_Sans','Noto_Sans',sans-serif] text-[22px] leading-none text-white">
          56<span className="pt-1.5 text-[12px]">%</span>
        </div>
      </div>
      <div className="-ml-4 flex h-[42px] w-[74px] flex-col items-end justify-center gap-1 rounded-r-[10px] bg-[#25262b] pr-2 text-[12px] leading-[13px]">
        <span className="flex items-center gap-1.5 text-[#5ce65c]">
          56℃
          <svg width="9" height="13" viewBox="0 0 9 13">
            <path d="M5 0c5 4 5 9-.5 13C-1 10 0 6 5 0z" fill="#3ddc1e" />
            <path d="M5 3 4 13" stroke="#1c7a10" strokeWidth=".8" />
          </svg>
        </span>
        <span className="text-[#a8a8a8]">CPU温度</span>
      </div>
    </div>
  );
}

export default function App() {
  return (
    <div className="relative flex h-screen flex-col overflow-hidden bg-black font-['Liberation_Sans','Noto_Sans_CJK_SC',sans-serif]">
      <MenuBar />
      <div className="border-b-2 border-[#c8c0c0]">
        <Toolbar />
      </div>
      <div className="flex min-h-0 flex-1">
        <SideBar />
        <Charts />
        <QuotePanel />
      </div>
      <CpuWidget />
    </div>
  );
}
